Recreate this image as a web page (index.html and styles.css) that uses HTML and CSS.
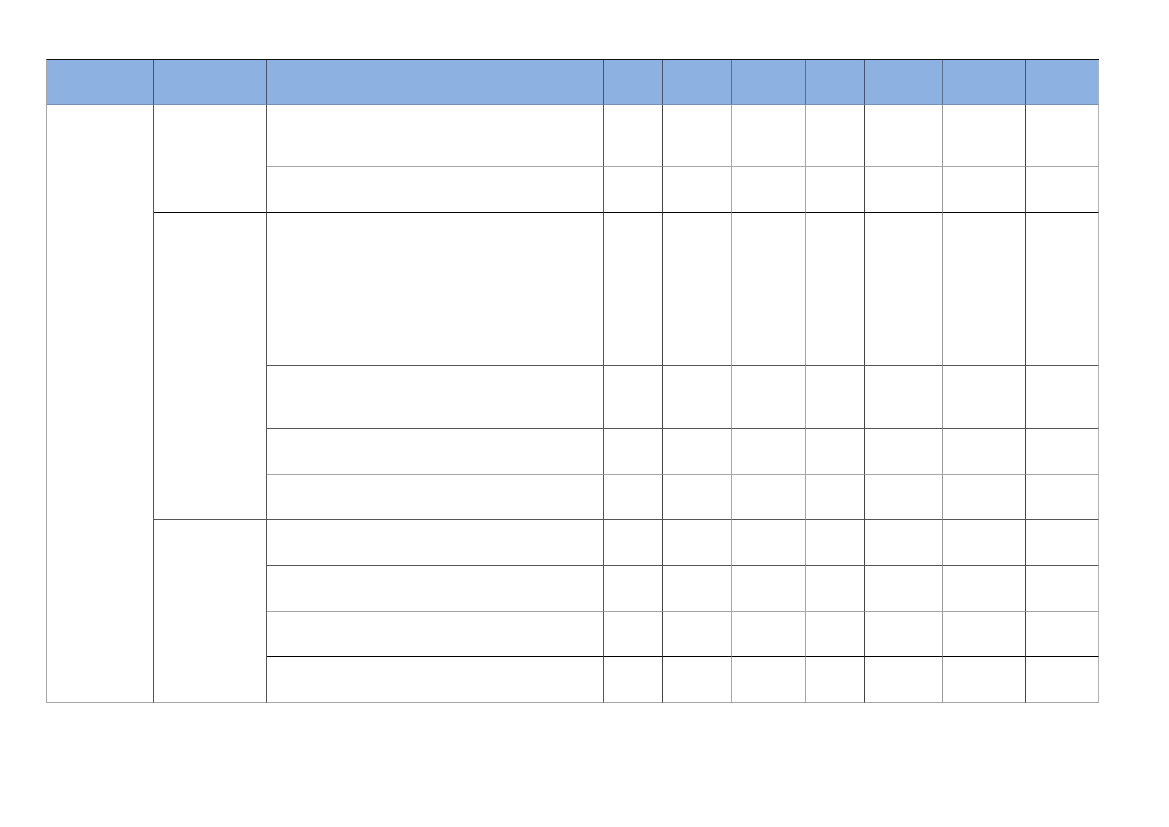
FILE: index.html
```html
<!DOCTYPE html>
<html lang="en">
<head>
<meta charset="utf-8">
<title>Table</title>
<link rel="stylesheet" href="styles.css">
</head>
<body>
<div class="page">
  <div class="sheet">
    <div class="row head">
      <div class="c"></div><div class="c"></div><div class="c"></div><div class="c"></div><div class="c"></div>
      <div class="c"></div><div class="c"></div><div class="c"></div><div class="c"></div><div class="c"></div>
    </div>
    <div class="row r-light">
      <div class="c span-a"></div>
      <div class="c span-g1"></div>
      <div class="c"></div><div class="c"></div><div class="c"></div><div class="c"></div>
      <div class="c"></div><div class="c"></div><div class="c"></div><div class="c"></div>
    </div>
    <div class="row r-black">
      <div class="c"></div><div class="c"></div><div class="c"></div><div class="c"></div>
      <div class="c"></div><div class="c"></div><div class="c"></div><div class="c"></div>
    </div>
    <div class="row r-dark">
      <div class="c span-g2"></div>
      <div class="c"></div><div class="c"></div><div class="c"></div><div class="c"></div>
      <div class="c"></div><div class="c"></div><div class="c"></div><div class="c"></div>
    </div>
    <div class="row r-dark">
      <div class="c"></div><div class="c"></div><div class="c"></div><div class="c"></div>
      <div class="c"></div><div class="c"></div><div class="c"></div><div class="c"></div>
    </div>
    <div class="row r-light">
      <div class="c"></div><div class="c"></div><div class="c"></div><div class="c"></div>
      <div class="c"></div><div class="c"></div><div class="c"></div><div class="c"></div>
    </div>
    <div class="row r-dark">
      <div class="c"></div><div class="c"></div><div class="c"></div><div class="c"></div>
      <div class="c"></div><div class="c"></div><div class="c"></div><div class="c"></div>
    </div>
    <div class="row r-dark">
      <div class="c span-g3"></div>
      <div class="c"></div><div class="c"></div><div class="c"></div><div class="c"></div>
      <div class="c"></div><div class="c"></div><div class="c"></div><div class="c"></div>
    </div>
    <div class="row r-light">
      <div class="c"></div><div class="c"></div><div class="c"></div><div class="c"></div>
      <div class="c"></div><div class="c"></div><div class="c"></div><div class="c"></div>
    </div>
    <div class="row r-black">
      <div class="c"></div><div class="c"></div><div class="c"></div><div class="c"></div>
      <div class="c"></div><div class="c"></div><div class="c"></div><div class="c"></div>
    </div>
    <div class="row r-light">
      <div class="c"></div><div class="c"></div><div class="c"></div><div class="c"></div>
      <div class="c"></div><div class="c"></div><div class="c"></div><div class="c"></div>
    </div>
  </div>
</div>
</body>
</html>
```

FILE: styles.css
```css
html, body {
  margin: 0;
  padding: 0;
  background: #ffffff;
  font-family: "Liberation Sans", Arial, sans-serif;
}

.page {
  width: 1169px;
  height: 827px;
  padding: 59px 0 0 46px;
  box-sizing: border-box;
}

.sheet {
  display: grid;
  grid-template-columns: 107px 113px 337px 59px 69px 74px 59px 78px 83px 73px;
  grid-template-rows: 45px 62px 46px 153px 63px 46px 45px 46px 46px 45px 46px;
  width: max-content;
  border-top: 1px solid #111111;
  border-left: 1px solid #a6a6a6;
}

.row {
  display: contents;
}

.c {
  box-sizing: border-box;
  border-right: 1px solid #555555;
  border-bottom: 1px solid #555555;
  background: #ffffff;
}

/* header */
.head .c {
  background: #8db2e1;
  border-bottom-color: #7890b2;
  border-right-color: #46536a;
}
.head .c:nth-child(5),
.head .c:nth-child(6) {
  border-right-color: #5d6f8c;
}
.head .c:nth-child(8) {
  border-right-color: #5d6f8c;
}
.head .c:last-child {
  border-right-color: #a9b7cc;
}

/* row bottom colours */
.r-light .c { border-bottom-color: #a6a6a6; }
.r-black .c { border-bottom-color: #000000; }
.r-dark .c { border-bottom-color: #555555; }

/* column right colours (body) */
.row:not(.head) .c:nth-last-child(1) { border-right-color: #b3b3b3; }
.row:not(.head) .c:nth-last-child(2) { border-right-color: #444444; }
.row:not(.head) .c:nth-last-child(3) { border-right-color: #999999; }
.row:not(.head) .c:nth-last-child(4) { border-right-color: #444444; }
.row:not(.head) .c:nth-last-child(5) { border-right-color: #a6a6a6; }
.row:not(.head) .c:nth-last-child(6) { border-right-color: #a6a6a6; }
.row:not(.head) .c:nth-last-child(7) { border-right-color: #444444; }
.row:not(.head) .c:nth-last-child(8) { border-right-color: #555555; }

/* spanning cells */
.row .c.span-a {
  grid-column: 1;
  grid-row: 2 / 12;
  border-right-color: #555555;
  border-bottom-color: #a6a6a6;
}
.row .c.span-g1 {
  grid-column: 2;
  grid-row: 2 / 4;
  border-right-color: #555555;
  border-bottom-color: #000000;
}
.row .c.span-g2 {
  grid-column: 2;
  grid-row: 4 / 8;
  border-right-color: #555555;
  border-bottom-color: #555555;
}
.row .c.span-g3 {
  grid-column: 2;
  grid-row: 8 / 12;
  border-right-color: #555555;
  border-bottom-color: #a6a6a6;
}
```
